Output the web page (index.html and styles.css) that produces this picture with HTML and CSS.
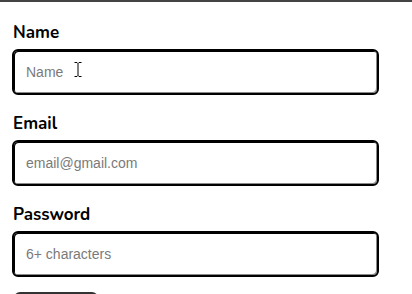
FILE: index.html
```html
<!DOCTYPE html>
<html lang="en">
<head>
<meta charset="utf-8">
<title>Sign up</title>
<link rel="stylesheet" href="styles.css">
</head>
<body>
<div class="topbar"></div>
<form class="form">
  <div class="field">
    <label class="label" for="name">Name</label>
    <div class="input-wrap">
      <input class="input" id="name" type="text" placeholder="Name">
      <svg class="ibeam" width="8" height="15" viewBox="0 0 8 15" aria-hidden="true">
        <path d="M0.5 0.5h2.5l1 1 1-1h2.5M4 1.5v12M0.5 14.5h2.5l1-1 1 1h2.5" fill="none" stroke="#000" stroke-width="1"/>
      </svg>
    </div>
  </div>
  <div class="field">
    <label class="label" for="email">Email</label>
    <div class="input-wrap">
      <input class="input" id="email" type="email" placeholder="email@gmail.com">
    </div>
  </div>
  <div class="field">
    <label class="label" for="password">Password</label>
    <div class="input-wrap">
      <input class="input" id="password" type="password" placeholder="6+ characters">
    </div>
  </div>
  <button class="submit" type="submit">Sign up</button>
</form>
</body>
</html>
```
FILE: styles.css
```css
html, body {
  margin: 0;
  padding: 0;
  background: #fff;
  overflow: hidden;
}
.topbar {
  height: 2px;
  background: #444;
}
.form {
  display: flex;
  flex-direction: column;
  gap: 18px;
  padding: 20px 0 0 12px;
  width: 367px;
}
.field {
  display: flex;
  flex-direction: column;
  gap: 5px;
}
.label {
  font-family: "Nunito", "Lato", "Noto Sans", sans-serif;
  font-weight: 700;
  font-size: 17px;
  line-height: 22px;
  color: #000;
  padding-left: 1px;
}
.input-wrap {
  position: relative;
}
.input {
  box-sizing: border-box;
  display: block;
  width: 100%;
  height: 46px;
  margin: 0;
  padding: 0 12px;
  border: 2px solid #000;
  border-radius: 6px;
  box-shadow: inset 1px 1px 0 #000, inset -1px -1px 0 #8a8a8a;
  font-family: "Liberation Sans", Arial, sans-serif;
  font-size: 14px;
  color: #000;
  background: #fff;
  outline: none;
}
.input::placeholder {
  color: #7a7a7a;
}
.ibeam {
  position: absolute;
  left: 62px;
  top: 13px;
}
.submit {
  align-self: flex-start;
  margin: -3px 0 0 2px;
  box-sizing: border-box;
  width: 84px;
  height: 48px;
  padding: 16px 0 0;
  border: 2px solid #333;
  border-radius: 6px;
  background: #fff;
  font-family: "Lato", sans-serif;
  font-size: 15px;
  line-height: 16px;
  vertical-align: top;
}
```
